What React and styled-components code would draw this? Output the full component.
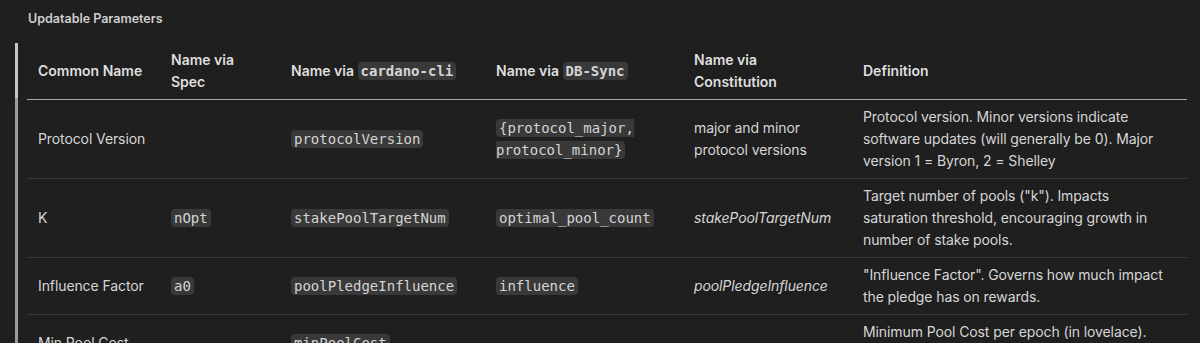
import React from "react";
import styled, { createGlobalStyle } from "styled-components";

const GlobalStyle = createGlobalStyle`
  html, body {
    margin: 0;
    padding: 0;
    background: #1f1f1f;
    overflow: hidden;
  }
  body {
    font-family: Inter, "Noto Sans", sans-serif;
    color: #d6d6d6;
  }
`;

const Page = styled.div`
  padding: 11px 0 0 15px;
`;

const Title = styled.h4`
  margin: 0 0 16px 13px;
  font-size: 12.5px;
  line-height: 16px;
  font-weight: 600;
  color: #d0d0d0;
`;

const Quote = styled.div`
  border-left: 3px solid;
  border-image: linear-gradient(to bottom, #c6c6c6 56px, #9c9c9c 56px) 1;
  padding-left: 9px;
`;

const Table = styled.table`
  width: 1160px;
  table-layout: fixed;
  border-collapse: collapse;
  font-size: 14px;
  line-height: 22px;
  letter-spacing: -0.1px;
`;

const Col = styled.col`
  width: ${(p) => p.$w}px;
`;

const Th = styled.th`
  text-align: left;
  font-weight: 600;
  color: #dedede;
  padding: 6px 11px;
  vertical-align: middle;
  border-bottom: 1px solid #a8a8a8;
  letter-spacing: 0;
`;

const Row = styled.tr`
  border-bottom: 1px solid #3a3a3a;
`;

const Td = styled.td`
  padding: 6px 11px;
  vertical-align: middle;
  font-style: ${(p) => (p.$italic ? "italic" : "normal")};
`;

const Code = styled.code`
  font-family: "DejaVu Sans Mono", "Liberation Mono", monospace;
  font-size: 14px;
  letter-spacing: 0;
  background: #393939;
  color: #d4d4d4;
  border-radius: 4px;
  padding: 1px 3px;
`;

const columns = [
  { w: 133, label: "Common Name" },
  { w: 120, label: "Name via Spec" },
  { w: 205, label: <>Name via <Code>cardano-cli</Code></> },
  { w: 198, label: <>Name via <Code>DB-Sync</Code></> },
  { w: 169, label: "Name via Constitution" },
  { w: 335, label: "Definition" },
];

const rows = [
  {
    name: "Protocol Version",
    spec: null,
    cli: "protocolVersion",
    db: "{protocol_major, protocol_minor}",
    constitution: "major and minor protocol versions",
    italic: false,
    def: "Protocol version. Minor versions indicate software updates (will generally be 0). Major version 1 = Byron, 2 = Shelley",
  },
  {
    name: "K",
    spec: "nOpt",
    cli: "stakePoolTargetNum",
    db: "optimal_pool_count",
    constitution: "stakePoolTargetNum",
    italic: true,
    def: 'Target number of pools ("k"). Impacts saturation threshold, encouraging growth in number of stake pools.',
  },
  {
    name: "Influence Factor",
    spec: "a0",
    cli: "poolPledgeInfluence",
    db: "influence",
    constitution: "poolPledgeInfluence",
    italic: true,
    def: '"Influence Factor". Governs how much impact the pledge has on rewards.',
  },
  {
    name: "Min Pool Cost",
    spec: null,
    cli: "minPoolCost",
    db: null,
    constitution: null,
    italic: true,
    def: "Minimum Pool Cost per epoch (in lovelace). Enables pledge effect.",
  },
];

export default function App() {
  return (
    <Page>
      <GlobalStyle />
      <Title>Updatable Parameters</Title>
      <Quote>
        <Table>
          <colgroup>
            {columns.map((c, i) => (
              <Col key={i} $w={c.w} />
            ))}
          </colgroup>
          <thead>
            <tr>
              {columns.map((c, i) => (
                <Th key={i}>{c.label}</Th>
              ))}
            </tr>
          </thead>
          <tbody>
            {rows.map((r) => (
              <Row key={r.name}>
                <Td>{r.name}</Td>
                <Td>{r.spec && <Code>{r.spec}</Code>}</Td>
                <Td>{r.cli && <Code>{r.cli}</Code>}</Td>
                <Td>{r.db && <Code>{r.db}</Code>}</Td>
                <Td $italic={r.italic}>{r.constitution}</Td>
                <Td>{r.def}</Td>
              </Row>
            ))}
          </tbody>
        </Table>
      </Quote>
    </Page>
  );
}
